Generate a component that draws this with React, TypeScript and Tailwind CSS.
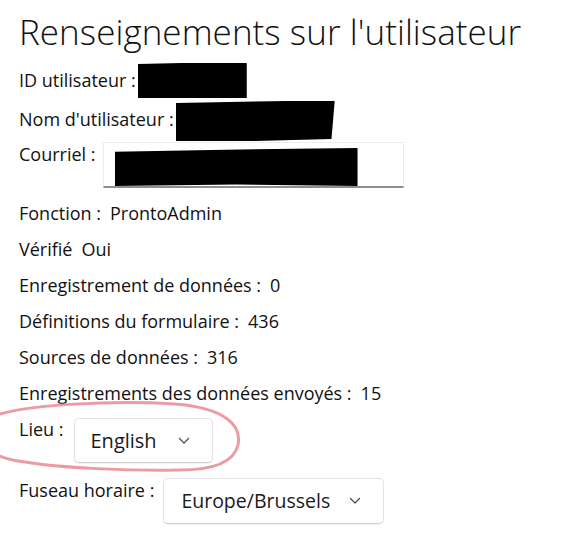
import React from "react";

function Chevron() {
  return (
    <svg width="12" height="8" viewBox="0 0 12 8" fill="none">
      <path d="M1.5 1.5 L6 6 L10.5 1.5" stroke="#4a4a4a" strokeWidth="1.2" strokeLinecap="round" strokeLinejoin="round" />
    </svg>
  );
}

function Redact({ className }: { className: string }) {
  return <div className={"bg-black " + className} />;
}

export default function App() {
  const font = { fontFamily: '"Open Sans", "Noto Sans", sans-serif' };
  return (
    <div className="relative w-[565px] h-[541px] bg-white overflow-hidden text-[#111]" style={font}>
      <div className="pl-[19px] flex flex-col">
        <h1 className="text-[35px] font-light leading-[40px] pt-[12px] tracking-[0.05px]">Renseignements sur l'utilisateur</h1>

        <div className="flex items-center h-[37px] mt-[10px] text-[18px]">
          <span>ID utilisateur :</span>
          <Redact className="w-[109px] h-[35px] ml-[2px] [clip-path:polygon(0_3%,40%_0,100%_0,100%_100%,0_100%)]" />
        </div>

        <div className="flex items-start h-[41px] mt-[2px] text-[18px]">
          <span className="mt-[5px]">Nom d'utilisateur :</span>
          <Redact className="w-[159px] h-[40px] ml-[2px] [clip-path:polygon(0_5%,70%_0,100%_0,98%_95%,50%_100%,0_100%)]" />
        </div>

        <div className="flex items-start h-[53px] text-[18px]">
          <span className="mt-[-1px]">Courriel :</span>
          <div className="ml-[7px] w-[301px] h-[46px] border border-[#ececec] border-b-2 border-b-[#8e8e8e] bg-white pl-[11px] pt-[5px]">
            <Redact className="w-[243px] h-[38px] [clip-path:polygon(0_10%,40%_5%,100%_0,100%_100%,50%_96%,0_100%)]" />
          </div>
        </div>

        <div className="flex flex-col text-[18px]">
          <div className="flex items-center h-[36px] gap-[9px]"><span>Fonction :</span><span>ProntoAdmin</span></div>
          <div className="flex items-center h-[36px] gap-[9px]"><span>Vérifié</span><span>Oui</span></div>
          <div className="flex items-center h-[36px] gap-[9px]"><span>Enregistrement de données :</span><span>0</span></div>
          <div className="flex items-center h-[36px] gap-[9px]"><span>Définitions du formulaire :</span><span>436</span></div>
          <div className="flex items-center h-[36px] gap-[9px]"><span>Sources de données :</span><span>316</span></div>
          <div className="flex items-center h-[36px] gap-[9px]"><span>Enregistrements des données envoyés :</span><span>15</span></div>
        </div>

        <div className="flex items-start mt-[7px] text-[18px]">
          <span className="leading-[20px] mt-[1px]">Lieu :</span>
          <button className="ml-[10px] w-[139px] h-[45px] rounded-[5px] border border-[#e3e3e3] border-b-[#cfcfcf] bg-white shadow-[0_1px_1px_rgba(0,0,0,0.06)] flex items-center pl-[16px] pr-[22px] justify-between text-[20px] text-[#1a1a1a]">
            <span>English</span>
            <Chevron />
          </button>
        </div>

        <div className="flex items-start mt-[15px] text-[18px]">
          <span className="leading-[20px] mt-[2px]">Fuseau horaire :</span>
          <button className="ml-[9px] w-[221px] h-[46px] rounded-[5px] border border-[#e3e3e3] border-b-[#cfcfcf] bg-white shadow-[0_1px_1px_rgba(0,0,0,0.06)] flex items-center pl-[17px] pr-[22px] justify-between text-[19.5px] text-[#1a1a1a]">
            <span>Europe/Brussels</span>
            <Chevron />
          </button>
        </div>
      </div>

      <svg className="absolute left-0 top-[398px] pointer-events-none" width="250" height="82" viewBox="0 398 250 82">
        <path
          d="M0 414 C 30 405, 110 400, 175 404 C 225 408, 242 425, 238 445 C 234 462, 215 470, 180 470 C 130 471, 60 468, 25 462 C 12 460, 4 458, 0 456"
          stroke="#e57b80"
          strokeOpacity="0.75"
          strokeWidth="3"
          fill="none"
          strokeLinecap="round"
        />
      </svg>
    </div>
  );
}
